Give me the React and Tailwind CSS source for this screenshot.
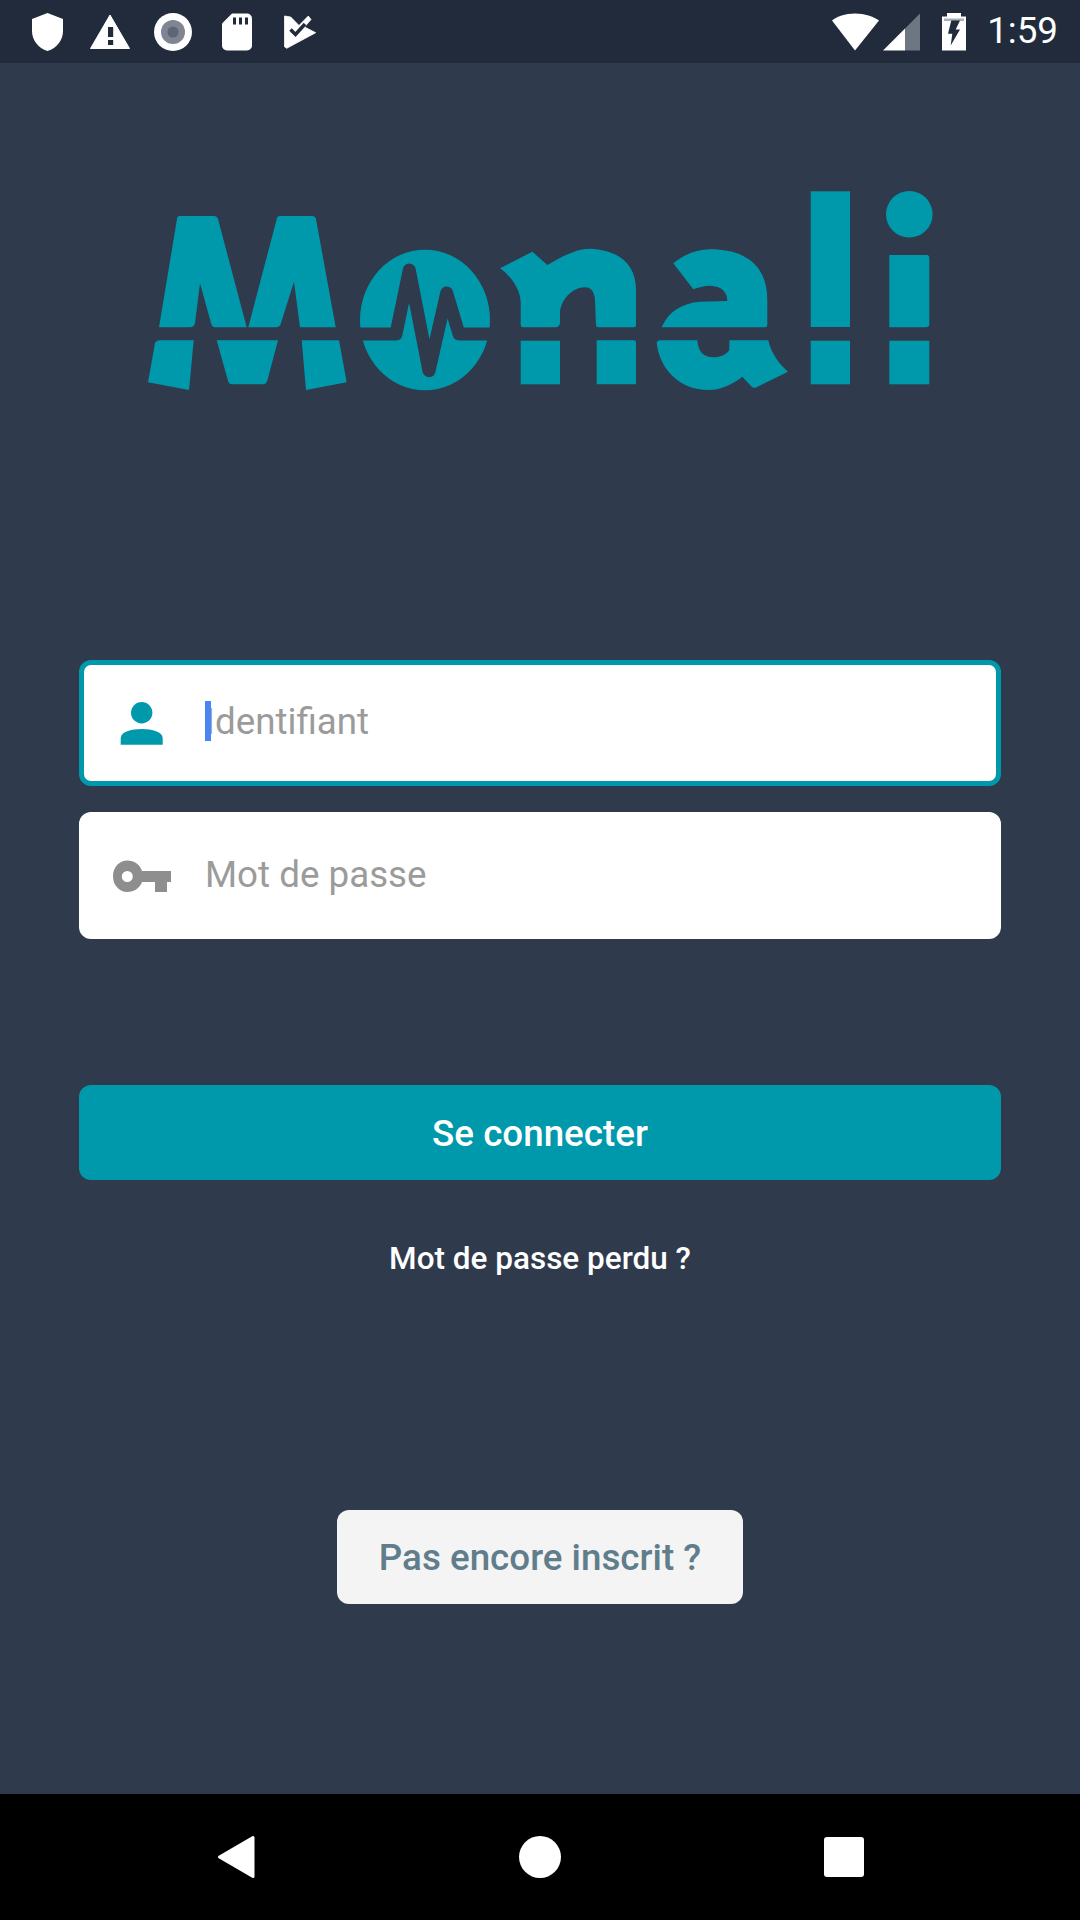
import React from 'react';

const BG = '#2f3a4d';

const StatusBar = () => (
  <div className="flex items-center h-[63px] pl-[32px] pr-[22px] bg-[#212b3b] text-white shrink-0">
    <svg className="w-[31px] h-[38px]" viewBox="32 12 31 38">
      <path fill="#fff" d="M47.5 12 L63 18 V30 C63 39 57 47 47.5 50 C38 47 32 39 32 30 V18 Z" />
    </svg>
    <svg className="ml-[27px] w-[40px] h-[36px]" viewBox="90 13 40 36">
      <path fill="#fff" stroke="#fff" strokeWidth="1" strokeLinejoin="round" d="M110 14 L129.500 47.500 H90.500 Z" />
      <rect x="108" y="26" width="5.200" height="10" fill="#212b3b" />
      <rect x="108" y="39" width="5.200" height="5" fill="#212b3b" />
    </svg>
    <svg className="ml-[24px] w-[38px] h-[38px]" viewBox="154 12 38 38">
      <circle cx="173" cy="31" r="19" fill="#fff" />
      <circle cx="173" cy="31" r="12" fill="#7f8593" />
      <circle cx="173" cy="31" r="5.500" fill="#5e6576" />
    </svg>
    <svg className="ml-[30px] w-[30px] h-[38px]" viewBox="222 12.500 30 38">
      <path fill="#fff" d="M232 13 H247 a5 5 0 0 1 5 5 V45 a5 5 0 0 1 -5 5 H227 a5 5 0 0 1 -5 -5 V23 Z" />
      <rect x="233" y="17" width="3" height="7" fill="#212b3b" />
      <rect x="239" y="17" width="3" height="7" fill="#212b3b" />
      <rect x="245" y="17" width="3" height="7" fill="#212b3b" />
    </svg>
    <svg className="ml-[32px] w-[32px] h-[36px]" viewBox="284 13 32 36">
      <path fill="#fff" stroke="#fff" strokeWidth="0.800" strokeLinejoin="round" d="M284.500 15 L290.700 16 L299 24.500 L308.300 15 L311 18.500 L304.500 26 L315.700 31.700 L286.700 47.300 L284.500 45.700 Z" />
      <path fill="none" stroke="#212b3b" strokeWidth="3.500" d="M290.500 28.500 L295.500 33.500 L305 23" />
    </svg>

    <svg className="ml-auto w-[47px] h-[38px]" viewBox="833 12.500 47 38">
      <path fill="#fff" d="M856 13 C846 13 838 16 833 20 L856 50 L880 20 C874 16 866 13 856 13 Z" />
    </svg>
    <svg className="ml-[4px] w-[37px] h-[38px]" viewBox="884 12.500 37 38">
      <path fill="#6d7683" d="M921 13 V50 H906 V28 Z" />
      <path fill="#fff" d="M906 28 V50 H884 Z" />
    </svg>
    <svg className="ml-[22px] w-[24px] h-[38px]" viewBox="943 12.500 24 38">
      <path fill="#fff" d="M948 12.500 H962 V16 H967 V50 H943 V16 H948 Z" />
      <rect x="945" y="18" width="20" height="2.500" fill="#aab0ba" />
      <path fill="#212b3b" d="M952.300 20 H961 L956.700 29 H961 L951.700 45 L953.300 33.300 H949 Z" />
    </svg>
    <span className="ml-[21px] text-[36.75px] leading-none font-normal">1:59</span>
  </div>
);

const Logo = () => (
  <svg className="block w-[800px] h-[220px] ml-[140px]" viewBox="140 180 800 220">
    <g fill="#0099ab">
      <path d="M180 216 H214 Q217 216 218 219 L246.700 327.300 H248.300 L276.700 219 Q277 216 280 216 H312 Q315 216 316 219 L335.700 327.300 H300 L294 281.700 L281 323 Q280 327.300 276 327.300 H215 Q212 327.300 211 323 L200 283.300 L195 323 Q194 327.300 190 327.300 H159 L177 219 Q177 216 180 216 Z" />
      <path d="M155 343.300 Q156 340.300 160 340.300 H193.700 L189 390 L148 382.300 Z" />
      <path d="M216.700 340.300 H278 L267.300 380.700 Q266 384.300 263 384.300 H232 Q229 384.300 228 380.700 Z" />
      <path d="M301.700 340.300 H339 L346.700 382.300 L306 390 Z" />
      <ellipse cx="425" cy="320" rx="65" ry="70.300" />
      <path d="M500 268.300 L532.300 251.700 L547.300 265 C560 258 575 248.700 590 248.700 C620 250 636 265 636 290 V325 Q636 327.300 634 327.300 H598.300 Q596 327.300 596 325 L595 300 Q594 287.300 585 287.300 C572 287.300 561 300 560 312 V323 Q559 327.300 556 327.300 H523 Q520.700 327.300 520.700 325 V303 C520.700 290 512 277 500 268.300 Z" />
      <rect x="520.700" y="340.700" width="39.300" height="43.600" />
      <path d="M596.700 340.300 H634 Q636 340.300 636 342.500 V384.300 H596.700 Z" />
      <path d="M673.300 263.300 C685 254 697 249.300 710 249.300 C745 249.300 767.300 265 767.300 300 V325 Q767.300 327.300 765 327.300 H661.700 C668 312 682 303 700 301.700 L727.300 301 Q727 286.700 710 285.700 C704 285.700 698 287.500 693.300 289.300 Z" />
      <path d="M656.700 343.300 Q657 340.300 660 340.300 H697.300 C698 352 704 357.300 713.300 357.300 C721 357.300 727 354 729.300 350 V340.300 H768.300 C771 353 779 364 788 371.700 L756 387.500 Q753 388 751.700 386.700 L742.300 376.700 C732 385 720 390 708.300 390 C680 390 660 370 656.700 343.300 Z" />
      <rect x="810.700" y="191.300" width="39.300" height="135.700" />
      <rect x="810.700" y="340.700" width="39.300" height="43.600" />
      <circle cx="909.300" cy="214.300" r="23.300" />
      <path d="M889.300 255 H926.500 Q929.300 255 929.300 258 V324 Q929.300 327.300 926 327.300 H889.300 Z" />
      <rect x="889.300" y="340.700" width="40" height="43.600" />
    </g>
    {/* pulse line cut through the O */}
    <path
      d="M355 334 H396 L409.300 270 L429 370.700 L446.700 293 L459 334 H495"
      fill="none"
      stroke={BG}
      strokeWidth="13"
      strokeLinejoin="round"
    />
  </svg>
);

const NavBar = () => (
  <div className="relative flex items-center justify-between h-[126px] pl-[217px] pr-[216px] bg-black shrink-0">
    <svg className="w-[38px] h-[44px]" viewBox="217 1835 38 44">
      <path fill="#fff" stroke="#fff" strokeWidth="3" strokeLinejoin="round" d="M219.500 1857 L253 1837.500 V1876.500 Z" />
    </svg>
    <div className="w-[42px] h-[42px] rounded-full bg-white" />
    <div className="w-[40px] h-[40px] rounded-[3px] bg-white" />
  </div>
);

const App = () => {
  return (
    <div className="flex flex-col w-[1080px] h-[1920px] bg-[#2f3a4d] font-[Roboto,sans-serif] overflow-hidden">
      <StatusBar />
      <div className="flex-1 flex flex-col">
        <div className="mt-[117px]">
          <Logo />
        </div>

        <div className="mt-[260px] mx-[79px] flex flex-col">
          <div className="flex items-center h-[126px] pl-[28px] rounded-[12px] border-[5px] border-[#0099ab] bg-white">
            <svg className="w-[60px] h-[60px]" viewBox="112 693 60 60">
              <circle cx="141.700" cy="712.700" r="10.700" fill="#0099ab" />
              <path fill="#0099ab" d="M120.700 744.700 V738 C120.700 732 131 729 141.700 729 C152 729 162.700 732 162.700 738 V744.700 Z" />
            </svg>
            <div className="relative ml-[33px] mt-[-1px] text-[36.75px] leading-none text-[#9b9b9b]">
              <span className="absolute left-0 top-[-3px] w-[6px] h-[40px] bg-[#4a86f0]" />
              Identifiant
            </div>
          </div>

          <div className="flex items-center h-[127px] mt-[26px] pl-[28px] rounded-[12px] border-[5px] border-white bg-white">
            <svg className="w-[60px] h-[60px]" viewBox="112 845 60 60">
              <path
                fill="#8e8e8e"
                fillRule="evenodd"
                d="M127.300 859.500 C134 859.500 140 863.500 142 870 H171 V881 H167 V891 H155 V881 H142 C140 887 134 891 127.300 891 C119 891 113 884 113 875.300 C113 866.500 119 859.500 127.300 859.500 Z M127.300 870 A5.500 5.500 0 1 0 127.300 881 A5.500 5.500 0 1 0 127.300 870 Z"
              />
            </svg>
            <div className="ml-[33px] mt-[-1px] text-[36.75px] leading-none text-[#9b9b9b]">Mot de passe</div>
          </div>

          <button
            type="button"
            className="h-[95px] mt-[146px] pt-[2px] rounded-[12px] bg-[#0099ab] text-white text-[36.75px] font-medium"
          >
            Se connecter
          </button>

          <div className="mt-[62px] text-center text-white text-[31.5px] leading-[34px] font-medium">
            Mot de passe perdu ?
          </div>

          <button
            type="button"
            className="self-center w-[406px] h-[94px] mt-[234px] pt-[2px] rounded-[12px] bg-[#f4f4f4] text-[#607d8b] text-[36.75px] font-medium"
          >
            Pas encore inscrit ?
          </button>
        </div>
      </div>
      <NavBar />
    </div>
  );
};

export default App;
